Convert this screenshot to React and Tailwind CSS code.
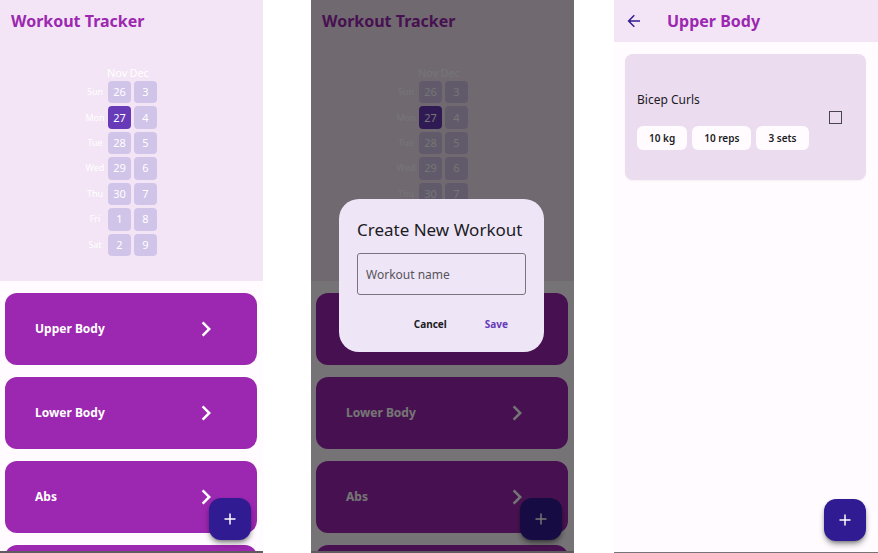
import React from "react";

const DAYS = [
  ["Sun", 26, 3],
  ["Mon", 27, 4],
  ["Tue", 28, 5],
  ["Wed", 29, 6],
  ["Thu", 30, 7],
  ["Fri", 1, 8],
  ["Sat", 2, 9],
];

const WORKOUTS = ["Upper Body", "Lower Body", "Abs"];

function Chevron() {
  return (
    <svg viewBox="0 0 24 24" className="size-[30px] shrink-0" fill="currentColor" aria-hidden="true">
      <path d="M10 6 8.59 7.41 13.17 12l-4.58 4.59L10 18l6-6z" />
    </svg>
  );
}

function AddButton() {
  return (
    <button
      type="button"
      aria-label="Add"
      className="absolute right-3 bottom-[11px] flex size-[42px] items-center justify-center rounded-xl bg-[#311b92] text-white shadow-md shadow-black/40"
    >
      <svg viewBox="0 0 12 12" className="size-3" stroke="currentColor" strokeWidth="1.5" aria-hidden="true">
        <path d="M6 0.5v11M0.5 6h11" />
      </svg>
    </button>
  );
}

function Screen({ children, thinEdge }) {
  return (
    <div
      className={
        thinEdge
          ? "relative h-full min-w-0 overflow-hidden border-b border-[#777377] bg-[#fffbfe]"
          : "relative h-full min-w-0 overflow-hidden border-b-2 border-[#5f5b5f] bg-[#fffbfe]"
      }
    >
      {children}
    </div>
  );
}

function DayCell({ day, selected }) {
  return (
    <button
      type="button"
      className={
        selected
          ? "flex items-center justify-center rounded bg-[#673ab7] text-[11px] leading-4 text-white"
          : "flex items-center justify-center rounded bg-[#d1c4e9] text-[11px] leading-4 text-white"
      }
    >
      {day}
    </button>
  );
}

function Calendar() {
  return (
    <div className="mx-auto mt-[23px] w-[93px] text-white">
      <div className="flex h-4 gap-0.5 pl-[22px] text-[11px] leading-4">
        <span>Nov</span>
        <span>Dec</span>
      </div>
      <div className="grid h-[175px] grid-cols-[20px_23px_23px] grid-rows-7 gap-[3px]">
        {DAYS.map(([name, first, second]) => (
          <React.Fragment key={name}>
            <span className="flex items-center justify-center text-[9px] leading-4">{name}</span>
            <DayCell day={first} selected={first === 27} />
            <DayCell day={second} selected={false} />
          </React.Fragment>
        ))}
      </div>
    </div>
  );
}

function Tracker() {
  return (
    <>
      <header className="h-[281px] bg-[#f3e5f5]">
        <h1 className="flex h-[42px] items-center pl-[11px] text-[16px] leading-6 font-bold text-[#9c27b0]">
          Workout Tracker
        </h1>
        <Calendar />
      </header>
      <main className="flex flex-col gap-3 pt-3 pr-1.5 pl-[5px]">
        {WORKOUTS.map((name) => (
          <button
            key={name}
            type="button"
            className="flex h-[72px] shrink-0 items-center justify-between rounded-xl bg-[#9c27b0] pr-9 pl-[30px] text-[12px] leading-4 font-bold text-white"
          >
            {name}
            <Chevron />
          </button>
        ))}
        <button
          type="button"
          aria-label="Next workout"
          className="h-[72px] shrink-0 rounded-xl bg-[#9c27b0]"
        />
      </main>
      <AddButton />
    </>
  );
}

function CreateDialog() {
  return (
    <div className="absolute inset-0 flex items-center bg-black/54 pr-[30px] pl-7">
      <form
        role="dialog"
        aria-labelledby="dialog-title"
        className="w-full rounded-[20px] bg-[#eee6f7] px-[18px] pt-[18px] pb-[14px]"
      >
        <h2 id="dialog-title" className="text-[17px] leading-[26px] whitespace-nowrap text-[#1c1b1f]">
          Create New Workout
        </h2>
        <input
          type="text"
          aria-label="Workout name"
          placeholder="Workout name"
          className="mt-2.5 block h-[42px] w-full rounded-[3px] border border-[#79747e] px-2 text-[12px] placeholder:text-[#57535c]"
        />
        <div className="mt-[15px] flex h-7 items-center justify-end gap-[38px] pr-[18px] text-[10px] leading-4 font-bold">
          <button type="button" className="text-[#1c1b1f]">Cancel</button>
          <button type="submit" className="text-[#673ab7]">Save</button>
        </div>
      </form>
    </div>
  );
}

function Chip({ children }) {
  return (
    <li className="flex h-6 items-center rounded-md bg-[#fffbfe] px-3 text-[10px] leading-4 font-semibold whitespace-nowrap">
      {children}
    </li>
  );
}

function WorkoutDetail() {
  return (
    <>
      <header className="flex h-[42px] items-center bg-[#f3e5f5] pl-[13px]">
        <button type="button" aria-label="Back" className="text-[#311b92]">
          <svg viewBox="0 0 14 14" className="block size-3.5" fill="none" stroke="currentColor" strokeWidth="1.5" aria-hidden="true">
            <path d="M13 7H2M7.3 1.3 1.6 7l5.7 5.7" />
          </svg>
        </button>
        <h1 className="pl-[26px] text-[16px] leading-6 font-bold text-[#9c27b0]">Upper Body</h1>
      </header>
      <main className="pt-3 pr-3 pl-[11px]">
        <section className="flex items-center justify-between rounded-lg bg-[#ebdcf0] pr-6 pl-3 text-[#1c1b1f] shadow-xs">
          <div className="pt-[37px] pb-[30px]">
            <label htmlFor="bicep" className="block text-[12px] leading-[18px]">Bicep Curls</label>
            <ul className="mt-[17px] flex gap-[5px]">
              <Chip>10 kg</Chip>
              <Chip>10 reps</Chip>
              <Chip>3 sets</Chip>
            </ul>
          </div>
          <input
            id="bicep"
            type="checkbox"
            className="size-[13px] appearance-none border border-[#49454f] checked:bg-[#673ab7]"
          />
        </section>
      </main>
      <AddButton />
    </>
  );
}

export default function App() {
  return (
    <div className="grid h-screen grid-cols-[263fr_48px_263fr_40px_264fr] bg-white font-['Noto_Sans','Open_Sans',sans-serif]">
      <Screen>
        <Tracker />
      </Screen>
      <div />
      <Screen>
        <Tracker />
        <CreateDialog />
      </Screen>
      <div />
      <Screen thinEdge>
        <WorkoutDetail />
      </Screen>
    </div>
  );
}
